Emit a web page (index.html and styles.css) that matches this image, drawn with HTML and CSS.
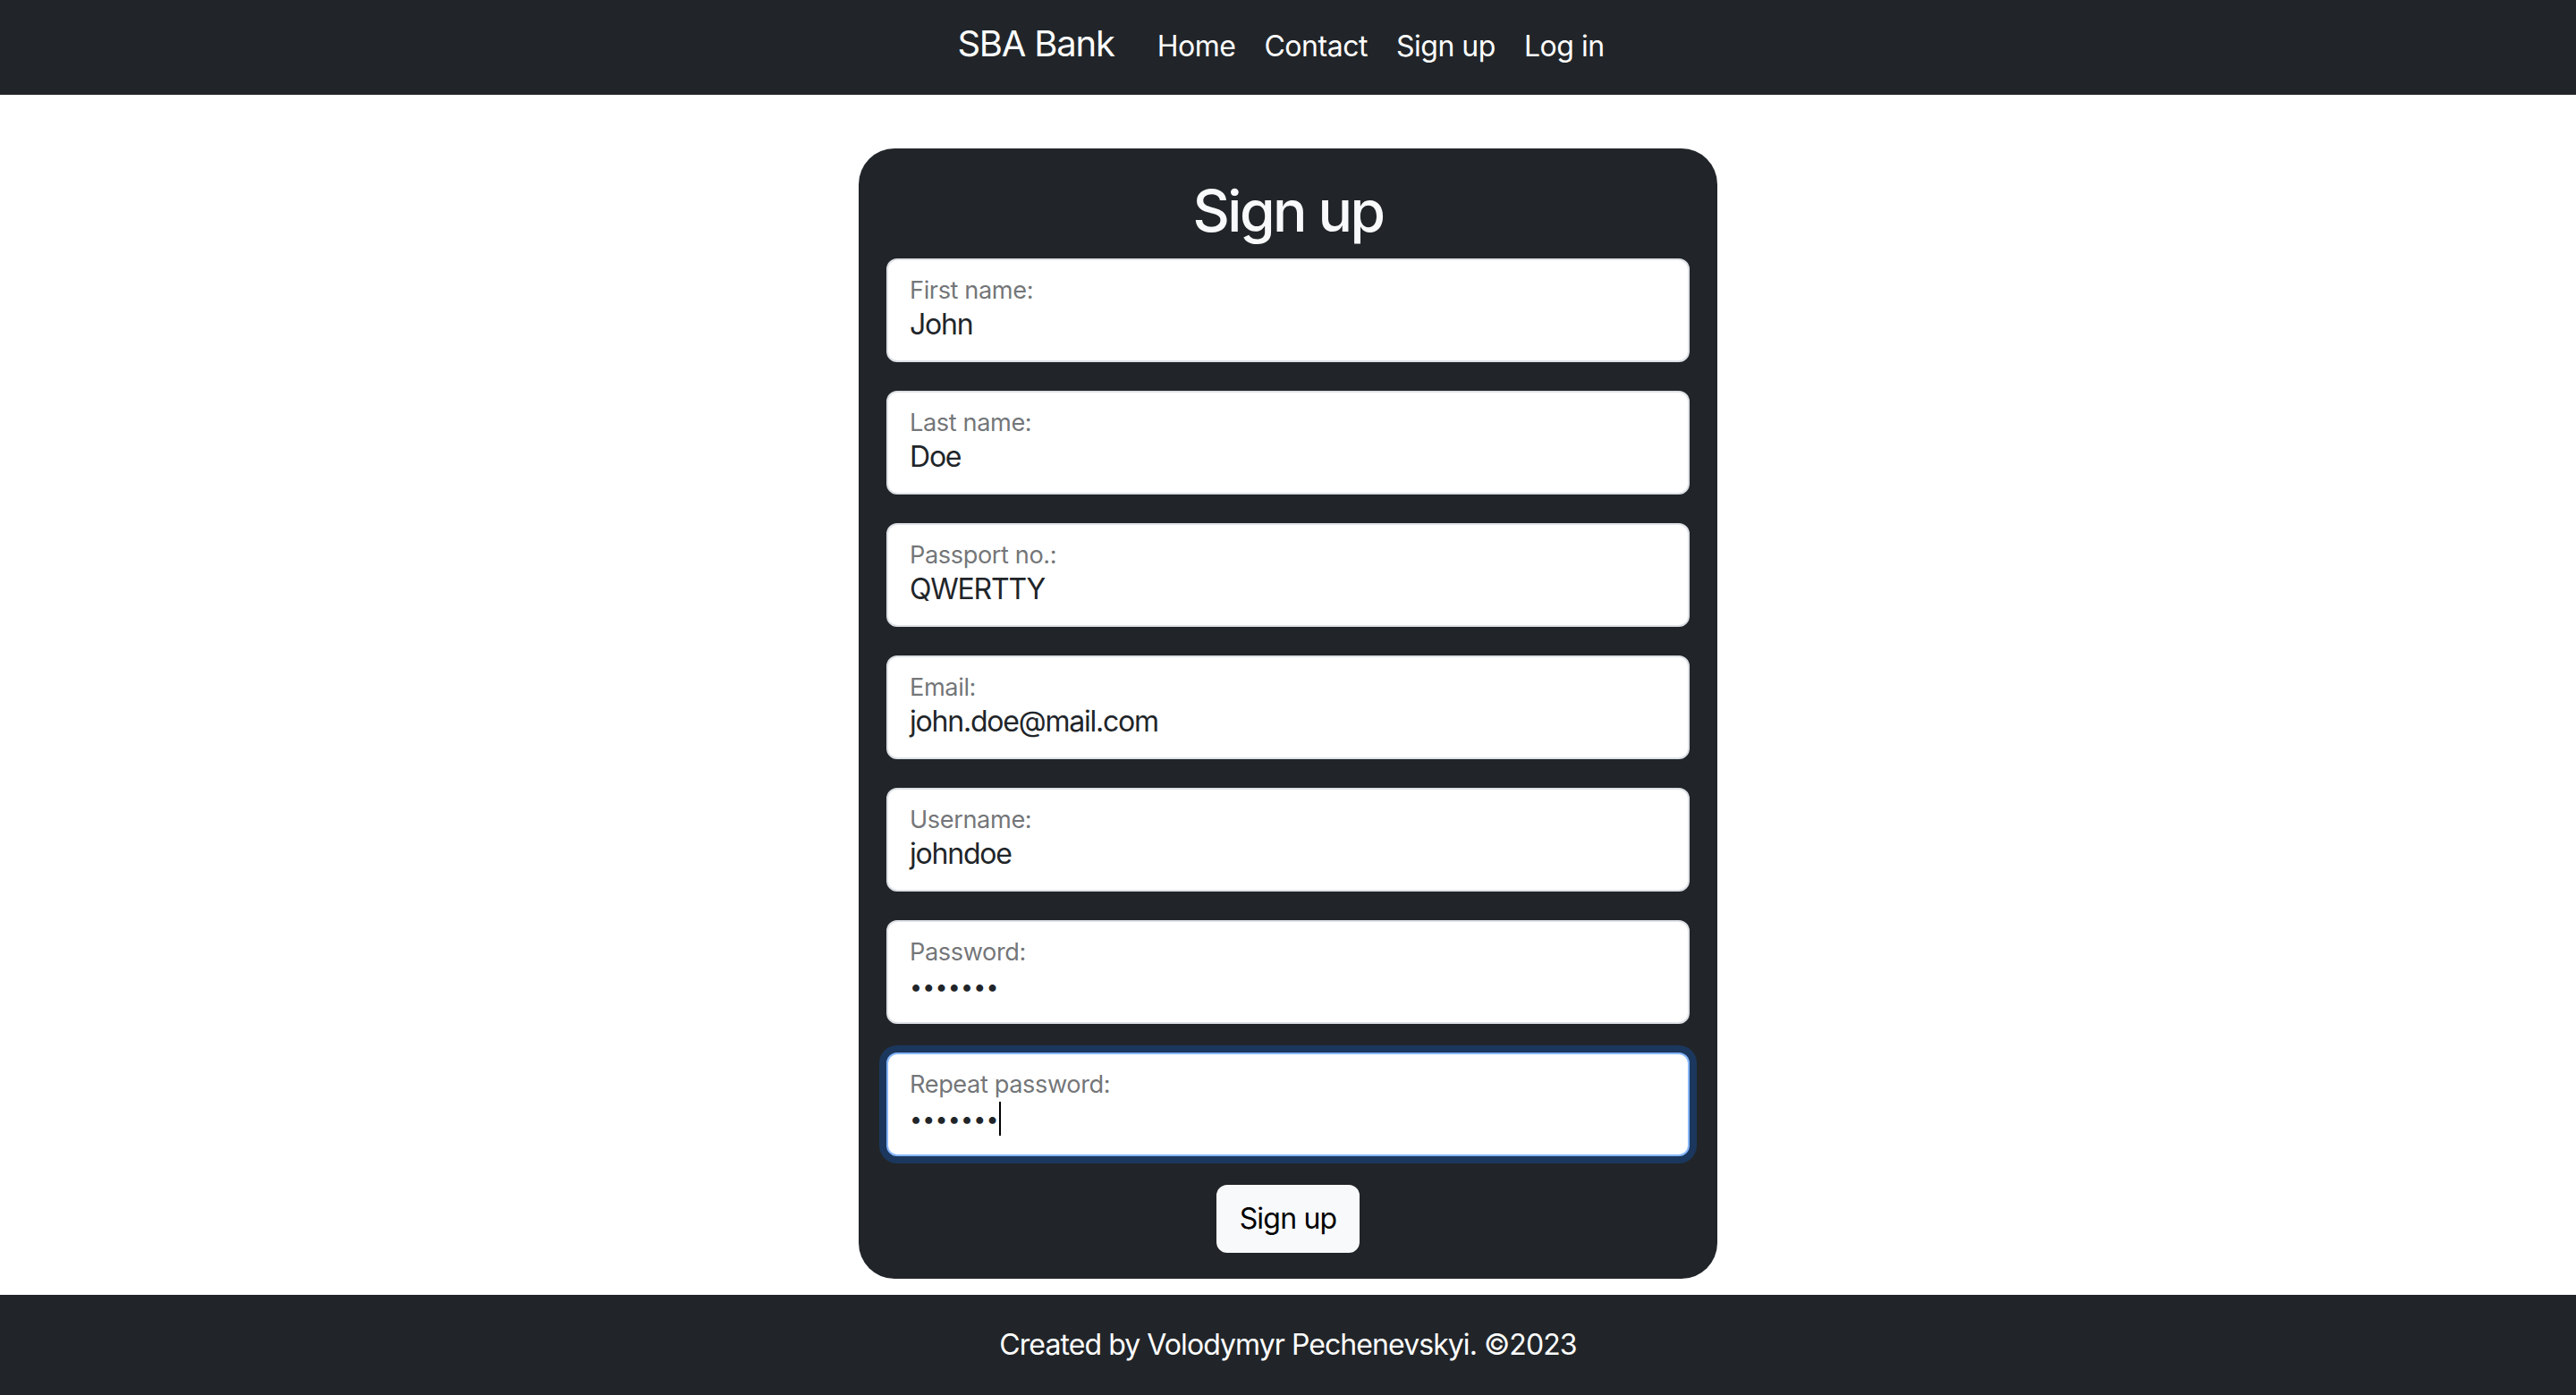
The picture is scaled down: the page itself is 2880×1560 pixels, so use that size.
FILE: index.html
```html
<!DOCTYPE html>
<html lang="en">
<head>
<meta charset="utf-8">
<title>SBA Bank — Sign up</title>
<link rel="stylesheet" href="styles.css">
</head>
<body>
<header class="navbar">
  <div class="nav-inner">
    <a class="brand" href="#">SBA Bank</a>
    <nav class="nav-links">
      <a class="nav-link" href="#">Home</a>
      <a class="nav-link" href="#">Contact</a>
      <a class="nav-link" href="#">Sign up</a>
      <a class="nav-link" href="#">Log in</a>
    </nav>
  </div>
</header>
<main class="main">
  <form class="card">
    <h2 class="card-title">Sign up</h2>
    <div class="fields">
      <div class="field">
        <div class="field-label">First name:</div>
        <div class="field-value">John</div>
      </div>
      <div class="field">
        <div class="field-label">Last name:</div>
        <div class="field-value">Doe</div>
      </div>
      <div class="field">
        <div class="field-label">Passport no.:</div>
        <div class="field-value">QWERTTY</div>
      </div>
      <div class="field">
        <div class="field-label">Email:</div>
        <div class="field-value">john.doe@mail.com</div>
      </div>
      <div class="field">
        <div class="field-label">Username:</div>
        <div class="field-value">johndoe</div>
      </div>
      <div class="field">
        <div class="field-label">Password:</div>
        <div class="field-value password">•••••••</div>
      </div>
      <div class="field focused">
        <div class="field-label">Repeat password:</div>
        <div class="field-value password">•••••••<span class="caret"></span></div>
      </div>
    </div>
    <button type="button" class="btn">Sign up</button>
  </form>
</main>
<footer class="footer">Created by Volodymyr Pechenevskyi. ©2023</footer>
</body>
</html>
```

FILE: styles.css
```css
* { box-sizing: border-box; }

html, body {
  margin: 0;
  padding: 0;
  background: #fff;
}

body {
  font-family: Inter, "Noto Sans", "Liberation Sans", sans-serif;
  color: #212529;
  letter-spacing: -0.03em;
  min-height: 1560px;
  display: flex;
  flex-direction: column;
}

.navbar {
  height: 106px;
  background: #212529;
  padding-top: 25px;
}

.nav-inner {
  display: flex;
  justify-content: center;
  align-items: baseline;
}

.brand {
  font-size: 40px;
  line-height: 48px;
  color: #fff;
  text-decoration: none;
  margin-right: 32px;
  letter-spacing: -0.03em;
}

.nav-links {
  display: flex;
  align-items: baseline;
}

.nav-link {
  font-size: 32px;
  line-height: 48px;
  color: #fff;
  text-decoration: none;
  padding: 0 16px;
}

.main {
  flex: 1;
  padding: 60px 0 18px;
  display: flex;
  justify-content: center;
}

.card {
  width: 960px;
  background: #212529;
  border-radius: 40px;
  padding: 32px 31px 29px;
  display: flex;
  flex-direction: column;
  align-items: center;
}

.card-title {
  margin: 0 0 16px;
  font-size: 64px;
  font-weight: 500;
  line-height: 75px;
  letter-spacing: -0.04em;
  color: #f8f9fa;
}

.fields {
  width: 100%;
  display: flex;
  flex-direction: column;
  gap: 32px;
  margin-bottom: 32px;
}

.field {
  height: 116px;
  background: #fff;
  border: 2px solid #dee2e6;
  border-radius: 12px;
  padding: 18px 24px 0;
}

.field.focused {
  border-color: #86b7fe;
  box-shadow: 0 0 0 8px rgba(13, 110, 253, 0.25);
}

.field-label {
  font-size: 27.2px;
  line-height: 32px;
  color: rgba(33, 37, 41, 0.65);
  letter-spacing: -0.015em;
}

.field-value {
  margin-top: 2px;
  font-size: 32px;
  line-height: 40px;
  color: #212529;
  white-space: nowrap;
  letter-spacing: -0.038em;
}

.field-value.password {
  font-size: 25px;
  letter-spacing: 0.2px;
  display: flex;
  align-items: center;
  height: 40px;
}

.caret {
  display: inline-block;
  width: 2px;
  height: 38px;
  background: #000;
  margin-left: 0;
}

.btn {
  font-family: inherit;
  font-size: 32px;
  line-height: 48px;
  letter-spacing: -0.025em;
  padding: 12px 24px;
  color: #000;
  background: #f8f9fa;
  border: 2px solid #f8f9fa;
  border-radius: 12px;
  cursor: pointer;
}

.footer {
  height: 112px;
  background: #212529;
  color: #fff;
  font-size: 32px;
  line-height: 112px;
  text-align: center;
  letter-spacing: -0.029em;
}
```
